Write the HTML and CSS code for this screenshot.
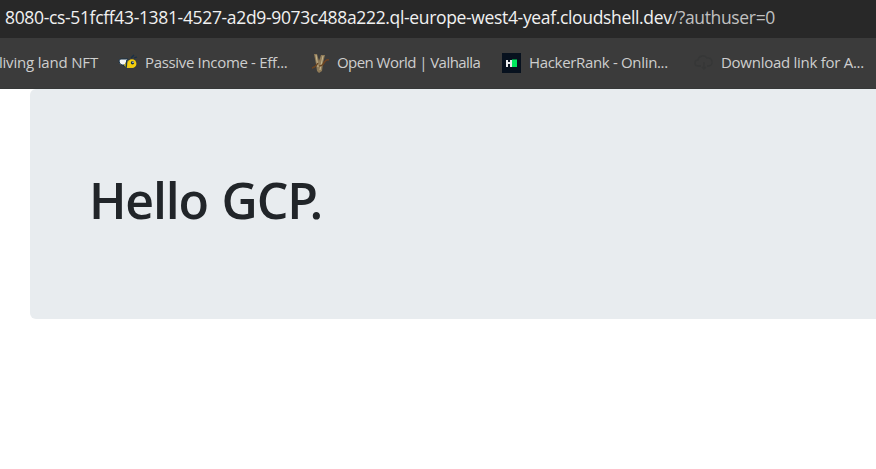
FILE: index.html
```html
<!DOCTYPE html>
<html lang="en">
<head>
<meta charset="utf-8">
<title>Hello GCP.</title>
<link rel="stylesheet" href="styles.css">
</head>
<body>
<header class="browser">
  <div class="address"><span class="host">8080-cs-51fcff43-1381-4527-a2d9-9073c488a222.ql-europe-west4-yeaf.cloudshell.dev</span><span class="path">/?authuser=0</span></div>
  <nav class="bookmarks">
    <a class="bookmark first"><span class="label">living land NFT</span></a>
    <a class="bookmark passive">
      <svg class="icon" viewBox="0 0 20 20"><path d="M13 5l3-3M16 5l3-1M5 12l4 3M14 15l2-3" stroke="#172f46" stroke-width="1.3" fill="none"/><path d="M1 8Q1 6 3 6h7l-3 6H4Q1 11 1 8z" fill="#f4f5f2" stroke="#173047"/><path d="M10 7l-4 5 2 3h5z" fill="#e8c719"/><path d="M9 7l-1 8" stroke="#17334b" stroke-width="1.5"/><circle cx="14" cy="10.7" r="4.4" fill="#f5ce0c"/><circle cx="14.5" cy="9.8" r="1.7" fill="#17334b"/><circle cx="15" cy="9.3" r=".7" fill="#fff"/></svg>
      <span class="label">Passive Income - Eff...</span>
    </a>
    <a class="bookmark world">
      <svg class="icon" viewBox="0 0 20 20"><path d="M2 15q4-1 6-5t4-3M8 13q4 1 6-3t5-3" stroke="#704222" stroke-width="1.5" fill="none"/><path d="M4 1h3l2 7 2-6h4l-2 8-1 8-3 2-2-2-1-7z" fill="#8f7b58"/><path d="M6 2l2 12M13 3l-3 14" stroke="#c5b48c" stroke-width="1.1"/><path d="M2 15q4-1 6-5M9 13q4 0 5-4" stroke="#694522" stroke-width="1.2" fill="none"/></svg>
      <span class="label">Open World | Valhalla</span>
    </a>
    <a class="bookmark hacker">
      <svg class="icon" viewBox="0 0 20 20"><path d="M0 0h19v20H0z" fill="#07111e"/><path d="M4 7h2v2h2V7h2v7H8v-3H6v3H4z" fill="#e9eaec"/><path d="M10 6.5h5V14h-5z" fill="#00e95e"/></svg>
      <span class="label">HackerRank - Onlin...</span>
    </a>
    <a class="bookmark download">
      <svg class="icon" viewBox="0 0 20 20"><path d="M7 13H4a3 3 0 0 1 0-6 5 5 0 0 1 9-2 4 4 0 0 1 2 8h-2M10 9v7M8 14l2 2 2-2" fill="none" stroke="#363737" stroke-width="1.4"/></svg>
      <span class="label">Download link for A...</span>
    </a>
  </nav>
</header>
<main class="page">
  <section class="jumbotron"><h1>Hello GC<span class="kern">P</span>.</h1></section>
</main>
</body>
</html>
```
FILE: styles.css
```css
* { box-sizing: border-box; }
body { margin: 0; background: #fff; font-family: "Open Sans", sans-serif; overflow: hidden; }
.browser { height: 89px; background: #3b3b3b; white-space: nowrap; border-bottom: 1px solid #363838; }
.address { height: 38px; padding-left: 5px; background: #282828; color: #f1f1f1; font-size: 17.5px; line-height: 35px; letter-spacing: -0.34px; }
.path { color: #c1c1c1; }
.bookmarks { height: 50px; display: flex; align-items: center; color: #cecece; font-size: 15px; line-height: 20px; letter-spacing: -0.33px; }
.bookmark { display: flex; align-items: center; flex: none; }
.label { padding-bottom: 2px; }
.first { width: 98px; justify-content: flex-end; margin-right: 20px; letter-spacing: -0.18px; }
.icon { width: 20px; height: 20px; flex: none; margin-right: 7px; }
.passive { width: 192px; }
.world { width: 192px; letter-spacing: -0.55px; }
.hacker { width: 192px; }
.download { width: 182px; letter-spacing: -0.27px; }
.page { padding-left: 30px; }
.jumbotron { height: 230px; padding: 74px 59px; background: #e8ecef; border-radius: 6px 0 0 6px; color: #212529; }
h1 { margin: 0; font-size: 50px; line-height: 74px; font-weight: 540; letter-spacing: -1.2px; word-spacing: 2px; }
.kern { letter-spacing: -8.5px; }
```
